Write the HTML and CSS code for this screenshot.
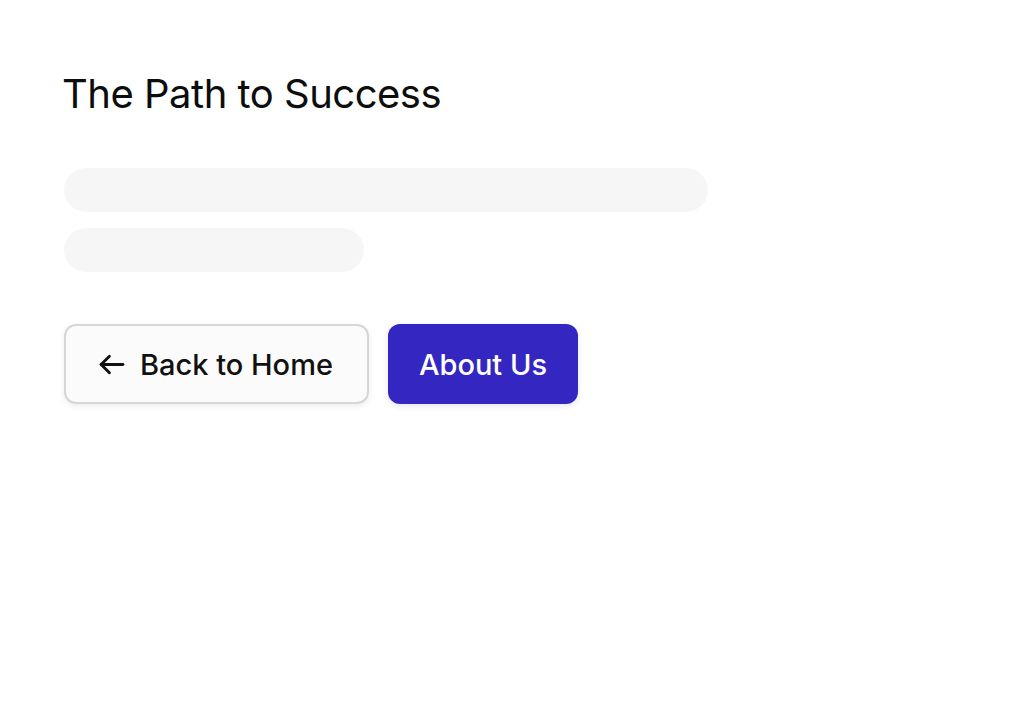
FILE: index.html
```html
<!DOCTYPE html>
<html lang="en">
<head>
<meta charset="utf-8">
<title>The Path to Success</title>
<link rel="stylesheet" href="styles.css">
</head>
<body>
<main class="page">
  <h1 class="title">The Path to Success</h1>
  <div class="skeleton">
    <div class="bar bar-long"></div>
    <div class="bar bar-short"></div>
  </div>
  <div class="actions">
    <button class="btn btn-outline" type="button">
      <svg class="icon" viewBox="0 0 26 24" width="27" height="25" fill="none" stroke="currentColor" stroke-width="2.8" stroke-linecap="round" stroke-linejoin="round"><path d="M24 12H3"/><path d="M11 4l-8 8 8 8"/></svg>
      <span>Back to Home</span>
    </button>
    <button class="btn btn-primary" type="button">About Us</button>
  </div>
</main>
</body>
</html>
```
FILE: styles.css
```css
* { box-sizing: border-box; }
html, body { margin: 0; padding: 0; background: #ffffff; }
body { font-family: Inter, "Noto Sans", sans-serif; color: #0d0d0d; }
.page { padding: 64px 64px; display: flex; flex-direction: column; align-items: flex-start; }
.title { margin: 6px 0 0 -2px; font-size: 40px; font-weight: 400; line-height: 48px; letter-spacing: -0.5px; }
.skeleton { margin-top: 50px; display: flex; flex-direction: column; gap: 16px; }
.bar { height: 44px; border-radius: 22px; background: #f6f6f6; }
.bar-long { width: 644px; }
.bar-short { width: 300px; }
.actions { margin-top: 52px; display: flex; gap: 19px; }
.btn { height: 80px; border-radius: 12px; font-family: inherit; font-size: 29px; font-weight: 500; letter-spacing: 0; display: flex; align-items: center; cursor: pointer; }
.btn-outline { width: 305px; padding: 0 24px 0 32px; gap: 15px; background: #fbfbfb; border: 2px solid #d6d6d6; color: #111; box-shadow: 0 2px 6px rgba(0,0,0,0.08); }
.btn-primary { width: 190px; justify-content: center; background: #3427c1; border: none; color: #fff; box-shadow: 0 2px 6px rgba(52,39,193,0.12); }
.icon { flex: none; }
```
